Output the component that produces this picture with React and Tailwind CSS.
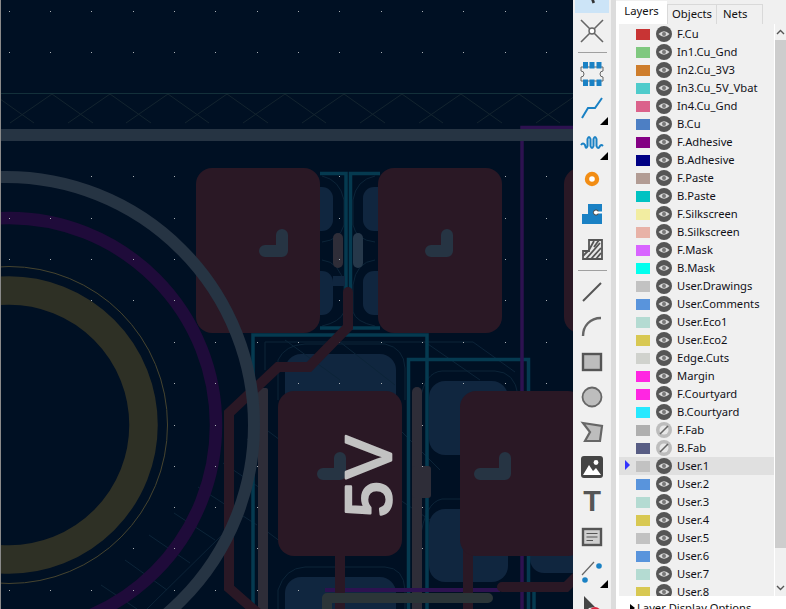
import React from 'react';

const COPPER = '#2a1825';
const BACK = '#10263f';
const TEAL = '#053a50';
const SLATE = '#263443';
const STRIP = '#2e2d38';
const PURPLE = '#2d1250';
const THIN = '#0c2438';

const layers = [
    ['F.Cu', '#c83434'], ['In1.Cu_Gnd', '#7fc87f'], ['In2.Cu_3V3', '#ce7d2c'], ['In3.Cu_5V_Vbat', '#4fcbcb'],
    ['In4.Cu_Gnd', '#db628b'], ['B.Cu', '#4d7fc4'], ['F.Adhesive', '#840084'], ['B.Adhesive', '#000084'],
    ['F.Paste', '#b29c94'], ['B.Paste', '#00c2c2'], ['F.Silkscreen', '#f2eda1'], ['B.Silkscreen', '#e8b2a7'],
    ['F.Mask', '#d864ff'], ['B.Mask', '#02ffee'], ['User.Drawings', '#c2c2c2'], ['User.Comments', '#5994dc'],
    ['User.Eco1', '#b4dbd2'], ['User.Eco2', '#d8c852'], ['Edge.Cuts', '#d0d2cd'], ['Margin', '#ff26e2'],
    ['F.Courtyard', '#ff26e2'], ['B.Courtyard', '#26e9ff'], ['F.Fab', '#afafaf', true], ['B.Fab', '#585d84', true],
    ['User.1', '#c2c2c2'], ['User.2', '#5994dc'], ['User.3', '#b4dbd2'], ['User.4', '#d8c852'],
    ['User.5', '#c2c2c2'], ['User.6', '#5994dc'], ['User.7', '#b4dbd2'], ['User.8', '#d8c852'],
];

const gridX = [9, 50, 91, 133, 174, 215, 257, 298, 339, 381, 422, 463, 505, 546];
const gridY = [11, 52, 176, 218, 259, 300, 342, 383, 425, 466, 507, 548, 590];
const apexes = [-7, 52, 110, 168, 227, 285, 344, 402, 461, 519, 578];

function showDot(x, y) {
    if (y < 60) return true;
    const d = Math.hypot(x - 9, y - 425);
    if (d < 160 && !(x === 91 && y === 300) && !(x === 133 && y === 300)) return false;
    return true;
}

function Board() {
    return (
        <svg className="w-[573px] h-[609px] flex-none" viewBox="0 0 573 609">
            <rect width="573" height="609" fill="#001023" />

            {apexes.map((x) => (
                <path key={x} d={`M${x - 42} 123 L${x} 94 L${x + 41} 123`} fill="none" stroke="#13242f" strokeWidth="1" />
            ))}
            <line x1="1" y1="93.5" x2="573" y2="93.5" stroke="#13303a" strokeWidth="1" />

            {/* back copper pads */}
            <g fill={BACK}>
                <rect x="300" y="187" width="33" height="44" rx="11" />
                <rect x="300" y="271" width="33" height="44" rx="11" />
                <rect x="363" y="187" width="33" height="44" rx="11" />
                <rect x="363" y="271" width="33" height="44" rx="11" />
                <rect x="285" y="354" width="111" height="100" rx="16" />
                <rect x="285" y="577" width="111" height="60" rx="16" />
                <rect x="429" y="381" width="79" height="74" rx="16" />
                <rect x="429" y="509" width="79" height="73" rx="16" />
                <rect x="530" y="500" width="60" height="73" rx="14" />
            </g>

            {/* thin zone outlines */}
            <g fill="none" stroke={THIN} strokeWidth="1">
                <path d="M322 176 Q340 180 344 200 V225 Q340 240 322 242" />
                <path d="M322 260 Q340 262 344 285 V312 Q340 322 322 326" />
                <path d="M375 176 Q356 180 353 200 V225 Q356 240 375 242" />
                <path d="M375 260 Q356 262 353 285 V312 Q356 322 375 326" />
                <path d="M265 370 V342 H473 L515 372" />
                <path d="M278 400 V360 Q285 345 305 344 H385 Q404 348 405 368 V400" />
                <path d="M278 609 V590 Q285 568 305 567 H385 Q404 568 405 590 V609" />
                <path d="M420 400 Q425 372 442 371 H495 Q515 372 518 395" />
                <path d="M420 540 Q425 502 442 499 H460" />
                <path d="M285 340 L340 380 M340 342 L395 385 M425 342 L480 380" />
                <path d="M174 513 L215 540 M149 535 L190 563 M125 560 L167 590 M101 585 L137 609" />
                <path d="M147 609 L224 533 M247 439 L265 450 M223 463 L260 488 M198 487 L257 525" />
                <path d="M260 425 L280 440 M265 530 L285 545 M400 500 L430 520 M400 430 L440 470" />
            </g>

            {/* rings */}
            <circle cx="9" cy="425" r="134.5" fill="none" stroke="#2e3025" strokeWidth="28.5" />
            <circle cx="9" cy="425" r="158.5" fill="none" stroke="#46442f" strokeWidth="1" />
            <circle cx="9" cy="425" r="207" fill="none" stroke="#1f0b3a" strokeWidth="12.5" />

            {/* teal tracks */}
            <g fill="none" stroke={TEAL} strokeWidth="3.5">
                <path d="M320 173.5 H346 V328 H320" />
                <path d="M380 173.5 H350.5 V328 H380" />
                <path d="M253 609 V335 H427 V609" />
                <path d="M408.5 609 V359.5 H528.5 V609" />
                <path d="M534 592 V609" />
            </g>

            <g fill={STRIP}>
                <rect x="333" y="233" width="10" height="35" rx="5" />
                <rect x="258" y="388" width="10" height="230" rx="2" />
                <rect x="412" y="387" width="10" height="230" rx="5" />
                <rect x="412" y="466" width="19" height="32" rx="3" />
            </g>
            <rect x="353" y="233" width="10" height="35" rx="5" fill="#26384a" />
            <rect x="333" y="276" width="12" height="10" fill={BACK} />

            {gridX.flatMap((x) => gridY.map((y) => (
                showDot(x, y) ? <rect key={`${x}-${y}`} x={x} y={y} width="1" height="1" fill="#aab0b4" /> : null
            )))}

            <path d="M522 609 V127.5 H573" fill="none" stroke={PURPLE} strokeWidth="3.5" />
            <path d="M325 590 H500" fill="none" stroke={PURPLE} strokeWidth="4" />

            {/* front copper */}
            <path d="M348 292 V327 L309 367 H278 L229 413 V588 L260 615" fill="none" stroke={COPPER} strokeWidth="10" strokeLinecap="round" strokeLinejoin="miter" />
            <path d="M340 550 V615 M468 550 V615" fill="none" stroke={COPPER} strokeWidth="10" />
            <path d="M502 587 H566 L580 573" fill="none" stroke={COPPER} strokeWidth="10" strokeLinecap="round" />
            <g fill={COPPER}>
                <rect x="196" y="168" width="124" height="165" rx="16" />
                <rect x="378" y="168" width="124" height="165" rx="16" />
                <rect x="564" y="168" width="124" height="165" rx="16" />
                <rect x="278" y="391" width="124" height="165" rx="16" />
                <rect x="460" y="391" width="124" height="165" rx="16" />
            </g>

            <path d="M327 598 H488 M327 598 V615" fill="none" stroke="#2b3538" strokeWidth="10" strokeLinecap="round" />

            <rect x="1" y="129" width="572" height="12" fill={SLATE} />
            <circle cx="6" cy="425" r="248" fill="none" stroke={SLATE} strokeWidth="12" />

            <g fill="none" stroke={SLATE} strokeWidth="12" strokeLinecap="round" strokeLinejoin="round">
                <path d="M265 251 H282 V235" />
                <path d="M431 251 H447 V235" />
                <path d="M323 474 H340 V458" />
                <path d="M480 474 H505 V458" />
            </g>

            <text
                transform="translate(391 517) rotate(-90)"
                fontFamily="'Liberation Sans', sans-serif"
                fontSize="64"
                letterSpacing="3"
                fill="#c2c2c2"
                stroke="#c2c2c2"
                strokeWidth="2.6"
                strokeLinejoin="round"
            >
                5V
            </text>

            <rect width="1" height="609" fill="#8a8a8a" />
        </svg>
    );
}

function Corner() {
    return <div className="absolute right-[1px] bottom-[1px] w-0 h-0 border-l-[8px] border-l-transparent border-b-[8px] border-b-black" />;
}

function Tool({ children, corner, active }) {
    return (
        <div className={`relative w-[34px] h-[35px] flex-none flex items-center justify-center ${active ? 'bg-[#cce4f7]' : ''}`}>
            {children}
            {corner && <Corner />}
        </div>
    );
}

function Icon({ children }) {
    return <svg className="w-6 h-6 overflow-visible" viewBox="0 0 24 24">{children}</svg>;
}

function Separator() {
    return (
        <div className="h-[8px] flex-none flex items-center">
            <div className="w-[29px] h-px bg-[#a0a0a0]" />
        </div>
    );
}

function Toolbar() {
    const blue = '#1a81c4';
    const gray = '#555555';
    return (
        <div className="w-[38px] h-[609px] flex-none flex flex-col items-center bg-[#f0f0f0] overflow-hidden">
            <div className="-mt-[22px] flex flex-col items-center">
                <Tool active>
                    <Icon>
                        <path d="M6 -2 L16 10 H12 L15 18.5 L12.5 19.5 L9.5 11 L6 14 Z" fill="#333" />
                    </Icon>
                </Tool>
                <Tool>
                    <Icon>
                        <path d="M1 1 L23 23 M23 1 L1 23" stroke="#666" strokeWidth="1.6" />
                        <circle cx="12" cy="12" r="3" fill="#fff" stroke="#666" strokeWidth="1.4" />
                    </Icon>
                </Tool>
                <Separator />
                <Tool>
                    <Icon>
                        <path d="M1 5 H23 V9 A3 3 0 0 0 23 15 V19 H1 V15 A3 3 0 0 0 1 9 Z" fill="#f0f0f0" stroke="#666" strokeWidth="1" />
                        <g fill={blue}>
                            <rect x="3" y="0" width="5" height="6.5" />
                            <rect x="9.5" y="0" width="5" height="6.5" />
                            <rect x="16.5" y="0" width="5" height="6.5" />
                            <rect x="3" y="17.5" width="5" height="6.5" />
                            <rect x="9.5" y="17.5" width="5" height="6.5" />
                            <rect x="16.5" y="17.5" width="5" height="6.5" />
                        </g>
                    </Icon>
                </Tool>
                <Tool corner>
                    <Icon>
                        <path d="M2 21 L8 11 H15 L22 1" fill="none" stroke={blue} strokeWidth="2" />
                    </Icon>
                </Tool>
                <Tool corner>
                    <Icon>
                        <path d="M1 13 Q3 10 5 13 Q6 18 7.5 14 V7 Q9 3 10.5 7 V14 Q12 18 13.5 14 V7 Q15 3 16.5 7 V14 Q18 18 20 14 Q21 12 23 14" fill="none" stroke={blue} strokeWidth="2" />
                    </Icon>
                </Tool>
                <Tool>
                    <Icon>
                        <circle cx="12" cy="12" r="5" fill="#fff" stroke="#f28d14" strokeWidth="4.4" />
                    </Icon>
                </Tool>
                <Tool>
                    <Icon>
                        <path d="M2 22 V12 H8 V2 H22 V22 Z" fill={blue} />
                        <circle cx="16" cy="10.5" r="2.6" fill="#fff" stroke="#444" strokeWidth="1" />
                        <rect x="18" y="9.5" width="4" height="2" fill="#fff" />
                    </Icon>
                </Tool>
                <Tool>
                    <Icon>
                        <path d="M3 22 V14 H9 V3 H22 V22 Z" fill="#e8e8e8" stroke={gray} strokeWidth="1.8" />
                        <path d="M3 19 L8 14 M6 22 L20 6 M11 22 L21 11 M16 22 L21 16 M9 13 L14 4 M14 10 L19 3" stroke={gray} strokeWidth="1.8" />
                    </Icon>
                </Tool>
                <Separator />
                <Tool>
                    <Icon>
                        <path d="M3 21 L21 3" stroke={gray} strokeWidth="2" />
                    </Icon>
                </Tool>
                <Tool>
                    <Icon>
                        <path d="M3 21 C3 11 10 3 21 3" fill="none" stroke="#666" strokeWidth="2.4" />
                    </Icon>
                </Tool>
                <Tool>
                    <Icon>
                        <rect x="3" y="4" width="18" height="16" fill="#bdbdbd" stroke={gray} strokeWidth="2.4" />
                    </Icon>
                </Tool>
                <Tool>
                    <Icon>
                        <circle cx="12" cy="12" r="9.5" fill="#bdbdbd" stroke="#666" strokeWidth="1.8" />
                    </Icon>
                </Tool>
                <Tool>
                    <Icon>
                        <path d="M3 3 L22 6 L20 21 L5 21 L10 12 Z" fill="#bdbdbd" stroke="#666" strokeWidth="2.2" />
                    </Icon>
                </Tool>
                <Tool>
                    <Icon>
                        <rect x="1" y="1" width="22" height="22" rx="3" fill="#444" />
                        <circle cx="16" cy="7.5" r="2.4" fill="#fff" />
                        <path d="M3 20 L9 10 L13 16 L16 13 L21 20 Z" fill="#fff" />
                    </Icon>
                </Tool>
                <Tool>
                    <span className="font-['Liberation_Sans',sans-serif] font-bold text-[29px] leading-none text-[#555]">T</span>
                </Tool>
                <Tool>
                    <Icon>
                        <rect x="3" y="4" width="18" height="16" fill="#cfcfcf" stroke={gray} strokeWidth="2.4" />
                        <path d="M6.5 8.5 H17.5 M6.5 12 H17.5 M6.5 15.5 H13" stroke={gray} strokeWidth="1.2" />
                    </Icon>
                </Tool>
                <Tool corner>
                    <Icon>
                        <path d="M2 15 L14 2" stroke="#666" strokeWidth="1.2" />
                        <circle cx="19" cy="6" r="2.8" fill={blue} />
                        <circle cx="5" cy="20" r="2.8" fill={blue} />
                    </Icon>
                </Tool>
                <Tool>
                    <Icon>
                        <path d="M4 1 L15 12 L9 13 L4 20 Z" fill="#444" />
                        <circle cx="15" cy="18" r="6" fill="#d8243c" />
                    </Icon>
                </Tool>
            </div>
        </div>
    );
}

function Eye({ off }) {
    if (off) {
        return (
            <svg className="w-4 h-4 flex-none" viewBox="0 0 16 16">
                <circle cx="8" cy="8" r="8" fill="#bdbdbd" />
                <circle cx="8" cy="8" r="4.5" fill="#e8e8e8" />
                <path d="M4 12 L12 4" stroke="#666" strokeWidth="1.6" />
            </svg>
        );
    }
    return (
        <svg className="w-4 h-4 flex-none" viewBox="0 0 16 16">
            <circle cx="8" cy="8" r="8" fill="#555" />
            <path d="M2.5 8 Q8 2.5 13.5 8 Q8 13.5 2.5 8 Z" fill="#d8d8d8" />
            <circle cx="8" cy="8" r="2" fill="#777" />
        </svg>
    );
}

function LayerRow({ name, color, off, selected }) {
    return (
        <div className={`relative h-[18px] flex-none flex items-center pl-[17px] ${selected ? 'bg-[#e0e0e0]' : ''}`}>
            {selected && <div className="absolute left-[6px] top-[3px] w-0 h-0 border-y-[5px] border-y-transparent border-l-[5px] border-l-[#3333ff]" />}
            <div className="w-[14px] h-[11px] flex-none" style={{ backgroundColor: color }} />
            <div className="ml-[6px]"><Eye off={off} /></div>
            <span className="ml-[5px] text-[11.2px] leading-none text-[#101018] whitespace-nowrap">{name}</span>
        </div>
    );
}

function Panel() {
    return (
        <div className="flex-1 h-[609px] flex flex-col bg-white font-['Noto_Sans',sans-serif] overflow-hidden">
            <div className="h-[24px] flex-none flex items-end bg-[#f0f0f0] text-[11.3px] text-[#111]">
                <div className="w-[51px] h-[23px] bg-white flex items-center justify-center pb-[3px]">Layers</div>
                <div className="w-[50px] h-[20px] border border-[#d9d9d9] border-b-0 flex items-center justify-center">Objects</div>
                <div className="w-[46px] h-[20px] border border-[#d9d9d9] border-b-0 border-l-0 flex items-center pl-[6px]">Nets</div>
            </div>
            <div className="h-[572px] flex-none flex pl-[3px]">
                <div className="w-[155px] flex-none flex flex-col pt-px bg-[#f0f0f0] overflow-hidden">
                    {layers.map(([name, color, off]) => (
                        <LayerRow key={name} name={name} color={color} off={off} selected={name === 'User.1'} />
                    ))}
                </div>
                <div className="w-[11px] ml-px flex-none flex flex-col bg-[#f0f0f0]">
                    <div className="h-[16px] flex items-center justify-center">
                        <svg className="w-[9px] h-[6px]" viewBox="0 0 9 6"><path d="M1 5 L4.5 1.5 L8 5" fill="none" stroke="#555" strokeWidth="1.4" /></svg>
                    </div>
                    <div className="h-[508px] bg-[#cdcdcd]" />
                    <div className="flex-1" />
                    <div className="h-[16px] flex items-center justify-center">
                        <svg className="w-[9px] h-[6px]" viewBox="0 0 9 6"><path d="M1 1 L4.5 4.5 L8 1" fill="none" stroke="#555" strokeWidth="1.4" /></svg>
                    </div>
                </div>
            </div>
            <div className="flex-1 flex items-start pl-[14px] pt-[6px] text-[11.2px] leading-none text-[#111] whitespace-nowrap">
                <div className="mt-[2px] mr-[2px] w-0 h-0 border-y-[4px] border-y-transparent border-l-[5px] border-l-black" />
                Layer Display Options
            </div>
        </div>
    );
}

function App() {
    return (
        <div className="w-[786px] h-[609px] flex overflow-hidden bg-[#f0f0f0]">
            <Board />
            <Toolbar />
            <div className="w-[5px] flex-none bg-[#dcdcdc]" />
            <Panel />
        </div>
    );
}

export default App;
